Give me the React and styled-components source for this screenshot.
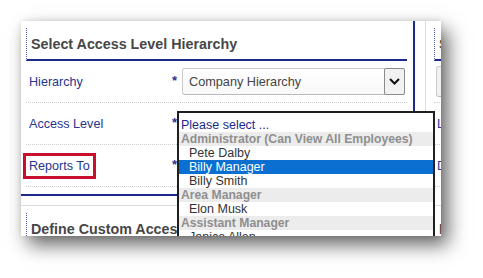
import React from 'react';
import styled, {createGlobalStyle} from 'styled-components';

const GlobalStyle = createGlobalStyle`
  html, body {
    margin: 0;
    padding: 0;
    background: #fff;
  }
  body {
    font-family: "Liberation Sans", Arial, sans-serif;
  }
`;

const Page = styled.div`
  width: 483px;
  height: 278px;
  padding: 21px 0 0 21px;
  box-sizing: border-box;
  overflow: hidden;
`;

const Card = styled.div`
  position: relative;
  display: flex;
  width: 420px;
  height: 215px;
  background: #fff;
  overflow: hidden;
  box-shadow: 7px 9px 18px rgba(0, 0, 0, 0.6), 0 0 6px rgba(0, 0, 0, 0.1);
`;

const Column = styled.div`
  flex: none;
  width: ${props => props.width};
  box-sizing: border-box;
`;

const Gutter = styled.div`
  flex: none;
  width: 11px;
  border-right: 1px solid #dcdcdc;
  box-sizing: border-box;
`;

const Section = styled.div`
  padding: 7px 6px 7px ${props => props.padLeft || '5px'};
  border-right: 2px solid ${props => props.edge || 'transparent'};
  border-bottom: 2px solid ${props => props.edge || 'transparent'};
`;

const LowerSection = styled.div`
  margin-top: 9px;
  padding: 7px 6px 0 ${props => props.padLeft || '5px'};
  border-top: 1px solid #dcdcdc;
`;

const Header = styled.div`
  display: flex;
  align-items: center;
  height: 31px;
  padding-left: 4px;
  border-left: 1px dotted #5a64b4;
  border-bottom: ${props => props.underline ? '2px solid #1b2a8a' : 'none'};
  font-size: 14.3px;
  font-weight: bold;
  color: #474747;
  white-space: nowrap;
`;

const Row = styled.div`
  display: flex;
  align-items: center;
  height: 41px;
  padding-left: 2px;
  border-bottom: 1px dotted #cfcfcf;
`;

const LabelCell = styled.div`
  width: 144px;
  flex: none;
`;

const Label = styled.span`
  display: inline-block;
  margin-left: -5px;
  padding: 5px 6px;
  font-size: 12.6px;
  line-height: 16px;
  color: #27358f;
  white-space: nowrap;
  box-shadow: ${props => props.marked ? 'inset 0 0 0 3px #c8102e' : 'none'};
`;

const Star = styled.span`
  flex: none;
  width: 10px;
  margin-top: -3px;
  font-size: 13px;
  font-weight: bold;
  color: #27358f;
`;

const Select = styled.div`
  display: flex;
  align-items: center;
  width: ${props => props.width || '223px'};
  height: ${props => props.height || '27px'};
  padding-left: 6px;
  box-sizing: border-box;
  border: 1px solid #cbcbcb;
  border-bottom-color: #b9b9b9;
  border-radius: 3px;
  background: ${props => props.muted ? '#f1f1f1' : 'linear-gradient(#fff, #f8f8f8)'};
  font-size: 12.7px;
  color: #444;
  white-space: nowrap;
`;

const SelectButton = styled.div`
  display: flex;
  align-items: center;
  justify-content: center;
  align-self: stretch;
  width: 19px;
  margin: -1px -1px -1px auto;
  border: 1px solid #8b8b8b;
  border-radius: 2px;
  background: #f2f2f2;
`;

const Listbox = styled.div`
  position: absolute;
  left: 156px;
  top: 90px;
  width: 258px;
  height: 150px;
  padding-top: 5px;
  box-sizing: border-box;
  border: 2px solid #1f1f1f;
  background: #fff;
`;

const Option = styled.div`
  height: 14px;
  padding-left: ${props => props.indent ? '10px' : '2px'};
  line-height: 14px;
  font-size: ${props => props.group ? '12.2px' : '12.5px'};
  font-weight: ${props => props.group ? 'bold' : 'normal'};
  color: ${props =>
    props.selected ? '#fff' :
    props.group ? '#8f8f8f' :
    props.placeholder ? '#1b2a8a' : '#333'};
  background: ${props =>
    props.selected ? '#0b6fd2' :
    props.group ? '#ececec' : 'transparent'};
  white-space: nowrap;
`;

const Chevron = () =>
  <svg width="11" height="7" viewBox="0 0 11 7">
    <polyline
      points="1,1 5.5,5.5 10,1"
      fill="none"
      stroke="#111"
      strokeWidth="2"
    />
  </svg>

const FieldRow = ({label, marked, children}) =>
  <Row>
    <LabelCell>
      <Label marked={marked}>{label}</Label>
    </LabelCell>
    <Star>*</Star>
    {children}
  </Row>

const options = [
  {text: 'Please select ...', placeholder: true},
  {text: 'Administrator (Can View All Employees)', group: true},
  {text: 'Pete Dalby', indent: true},
  {text: 'Billy Manager', indent: true, selected: true},
  {text: 'Billy Smith', indent: true},
  {text: 'Area Manager', group: true},
  {text: 'Elon Musk', indent: true},
  {text: 'Assistant Manager', group: true},
  {text: 'Janice Allen', indent: true}
];

const App = () =>
  <Page>
    <GlobalStyle />
    <Card>
      <Column width="394px">
        <Section edge="#1b2a8a">
          <Header underline>Select Access Level Hierarchy</Header>
          <FieldRow label="Hierarchy">
            <Select>
              Company Hierarchy
              <SelectButton>
                <Chevron />
              </SelectButton>
            </Select>
          </FieldRow>
          <FieldRow label="Access Level" />
          <FieldRow label="Reports To" marked />
        </Section>
        <LowerSection>
          <Header>Define Custom Access Levels</Header>
        </LowerSection>
      </Column>
      <Gutter />
      <Column width="320px">
        <Section padLeft="8px">
          <Header underline>Select Employee Details</Header>
          <Row>
            <Select width="280px" height="31px" muted />
          </Row>
          <Row>
            <Label>Location</Label>
          </Row>
          <Row>
            <Label>Department</Label>
          </Row>
        </Section>
        <LowerSection padLeft="8px">
          <Header>Employee Options</Header>
        </LowerSection>
      </Column>
      <Listbox>
        {options.map(option =>
          <Option
            key={option.text}
            group={option.group}
            indent={option.indent}
            selected={option.selected}
            placeholder={option.placeholder}
          >
            {option.text}
          </Option>
        )}
      </Listbox>
    </Card>
  </Page>

export default App;
